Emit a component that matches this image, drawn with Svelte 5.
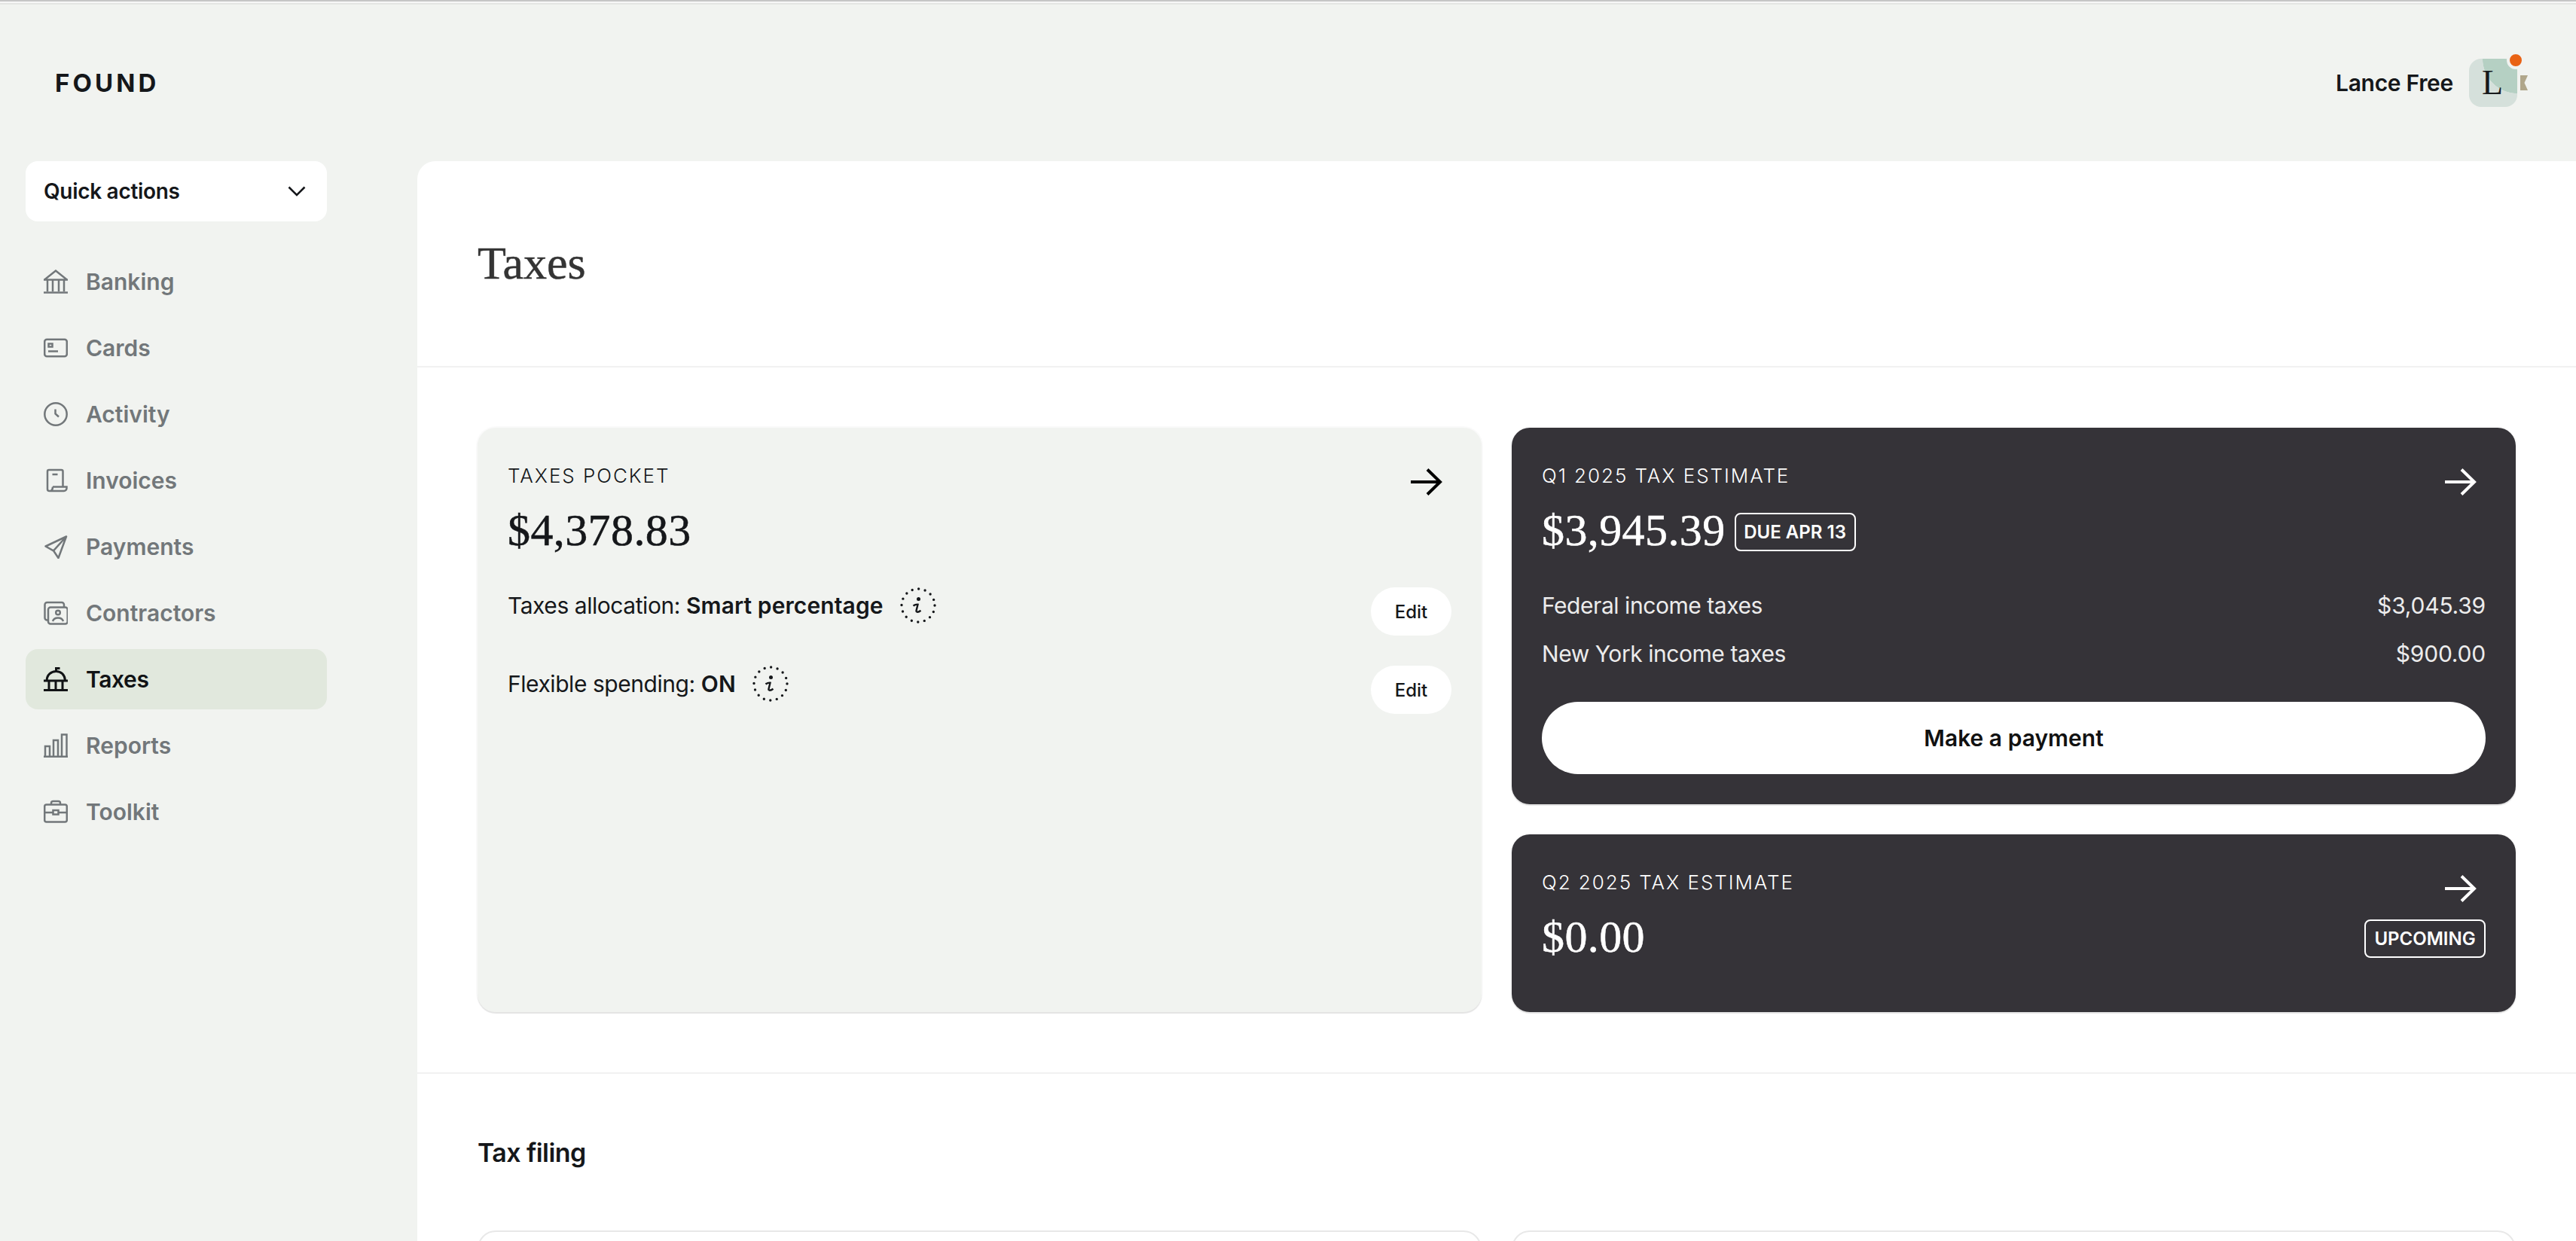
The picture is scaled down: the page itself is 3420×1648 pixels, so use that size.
<script>
  const nav = [
    { name: 'Banking' }, { name: 'Cards' }, { name: 'Activity' }, { name: 'Invoices' }, { name: 'Payments' },
    { name: 'Contractors' }, { name: 'Taxes', active: true }, { name: 'Reports' }, { name: 'Toolkit' }
  ];
</script>

{#snippet arrow()}
  <svg class="arrow" viewBox="0 0 42 36" fill="none" stroke="currentColor" stroke-width="4"><path d="M0 18h39M22 1.500l17 16.500-17 16.500" /></svg>
{/snippet}

{#snippet info()}
  <svg class="info" viewBox="0 0 48 48" fill="none" stroke="currentColor">
    <circle cx="24" cy="24" r="22" stroke-width="3.400" stroke-linecap="round" stroke-dasharray="0 8.64" />
    <circle cx="24.500" cy="15.500" r="2.500" fill="currentColor" stroke="none" />
    <path d="M17.500 24.500c2-1.500 4-2 6-1.800l-2 8.300c-.4 2.300 2.500 2.300 6-.3" stroke-width="2.400" />
  </svg>
{/snippet}

{#snippet icon(name)}
  <svg class="nav-icon" viewBox="0 0 32 32" fill="none" stroke="currentColor" stroke-width="2.500">
    {#if name === 'Banking'}
      <path d="M1 13.500 16 1.500l15 12zM0 13.500h32M5 14v15M12 14v15M20 14v15M27 14v15M0 30.500h32" />
    {:else if name === 'Cards'}
      <rect x="1.200" y="4.800" width="29.600" height="22.400" rx="3" /><rect x="6.500" y="10.500" width="5" height="4" /><path d="M6 20.500h13" />
    {:else if name === 'Activity'}
      <circle cx="16" cy="16" r="14.700" /><path d="M15.500 9.500v6l4.500 4" />
    {:else if name === 'Invoices'}
      <path d="M5 26V4a2 2 0 0 1 2-2h16.500a2 2 0 0 1 2 2v20M11.500 8h7" />
      <path d="M12 24.500h18.500v2a3.500 3.500 0 0 1-3.500 3.500H7.500A2.500 2.500 0 0 1 5 27.500V26M12 24.500c0 2.500-.5 4.500-2.500 5.500" />
    {:else if name === 'Payments'}
      <path d="M30 2.500 2.500 15.500l10.500 5.800 6.500 9.700zM30 2.500 13 21.300" stroke-linejoin="round" />
    {:else if name === 'Contractors'}
      <rect x="6" y="8.500" width="25.700" height="22" rx="3" />
      <path d="M6 25.500H4.500a3 3 0 0 1-3-3V5a3 3 0 0 1 3-3h19.500a3 3 0 0 1 3 3v3.500" />
      <circle cx="19" cy="15.500" r="2.800" /><path d="M12 27c1-3 4-4.500 7-4.500s6 1.500 7 4.500" />
    {:else if name === 'Taxes'}
      <path d="M16.500 6V1.500h5M4 17.500C4.500 10 10 5.500 16.500 5.500S28 10 28.500 17.500M0 18h32M7 18v11M16 18v11M25 18v11M0 30.500h32" stroke-width="3" />
    {:else if name === 'Reports'}
      <path d="M2 31V17h6v14M13 31V9h6v22M24 31V1.500h6.500V31M0 30.800h32" />
    {:else if name === 'Toolkit'}
      <rect x="1.200" y="6.500" width="29.600" height="23" rx="2.500" />
      <path d="M10 6.500V4.500a2.500 2.500 0 0 1 2.500-2.500h7a2.500 2.500 0 0 1 2.500 2.500v2M1 17h11.500M19.500 17H31" /><rect x="12.500" y="14" width="7" height="5.500" />
    {/if}
  </svg>
{/snippet}

<div class="page">
  <div class="chrome"></div>
  <header>
    <div class="logo">FOUND</div>
    <div class="user">
      <span class="uname">Lance Free</span>
      <div class="avatar">
        <span class="letter">L</span>
        <span class="dot"></span>
        <span class="flag"></span>
      </div>
    </div>
  </header>

  <div class="body">
    <aside>
      <button class="quick">
        <span>Quick actions</span>
        <svg class="chev" viewBox="0 0 24 14" fill="none" stroke="currentColor" stroke-width="2.600"><path d="M1.500 1.500 12 12 22.500 1.500" /></svg>
      </button>
      <nav>
        {#each nav as item}
          <div class="nav-item" class:active={item.active}>
            {@render icon(item.name)}
            <span>{item.name}</span>
          </div>
        {/each}
      </nav>
    </aside>

    <main>
      <section class="title-sec"><h1>Taxes</h1></section>
      <section class="cards-sec">
        <div class="card light">
          <div class="head"><div class="label">TAXES POCKET</div>{@render arrow()}</div>
          <div class="amount-row"><div class="amount">$4,378.83</div></div>
          <div class="settings">
            <div class="setting">
              <div class="set-text"><span>Taxes allocation: <b>Smart percentage</b></span>{@render info()}</div>
              <button class="edit">Edit</button>
            </div>
            <div class="setting">
              <div class="set-text"><span>Flexible spending: <b>ON</b></span>{@render info()}</div>
              <button class="edit">Edit</button>
            </div>
          </div>
        </div>
        <div class="stack">
          <div class="card dark">
            <div class="head"><div class="label">Q1 2025 TAX ESTIMATE</div>{@render arrow()}</div>
            <div class="amount-row"><div class="amount">$3,945.39</div><span class="badge">DUE APR 13</span></div>
            <div class="lines">
              <div class="line"><span>Federal income taxes</span><span class="val">$3,045.39</span></div>
              <div class="line"><span>New York income taxes</span><span class="val">$900.00</span></div>
            </div>
            <button class="pay">Make a payment</button>
          </div>
          <div class="card dark q2">
            <div class="head"><div class="label">Q2 2025 TAX ESTIMATE</div>{@render arrow()}</div>
            <div class="amount-row spread"><div class="amount">$0.00</div><span class="badge">UPCOMING</span></div>
          </div>
        </div>
      </section>
      <section class="filing">
        <h2>Tax filing</h2>
        <div class="filing-grid"><div class="stub"></div><div class="stub"></div></div>
      </section>
    </main>
  </div>
</div>

<style>
  :global(body) { margin: 0; background: #f1f3f0; }
  .page { width: 3420px; height: 1648px; overflow: hidden; background: #f1f3f0; font-family: Inter, "Liberation Sans", sans-serif; color: #15171a; display: flex; flex-direction: column; }
  .chrome { height: 2px; border-top: 2px solid #c6c6c6; border-bottom: 2px solid #e4e5e3; background: #f7f7f7; flex: none; }
  header { height: 208px; flex: none; display: flex; align-items: center; justify-content: space-between; padding: 0 78px 0 73px; }
  .logo { font-size: 33px; font-weight: 700; letter-spacing: 0.125em; line-height: 1; }
  .user { display: flex; align-items: center; gap: 21px; }
  .uname { font-size: 30px; font-weight: 600; letter-spacing: -0.3px; }
  .avatar { position: relative; width: 64px; height: 64px; border-radius: 16px; display: flex; align-items: center; justify-content: center; background: radial-gradient(circle 46px at 100% 0, #b5d0c3 99%, #d5e0db 100%); }
  .letter { font-family: "Liberation Serif", serif; font-size: 46px; line-height: 1; color: #171a1c; margin-right: 2px; }
  .dot { position: absolute; right: -10px; top: -10px; width: 16px; height: 16px; border-radius: 50%; background: #e96214; border: 4px solid #f1f2f0; }
  .flag { position: absolute; left: 68px; top: 22px; width: 10px; height: 20px; background: #b0a68a; clip-path: polygon(0 0, 100% 0, 55% 50%, 100% 100%, 0 100%); }

  .body { flex: 1; display: flex; min-height: 0; }
  aside { width: 554px; flex: none; padding-left: 34px; box-sizing: border-box; }
  .quick { width: 400px; height: 80px; border: 0; border-radius: 16px; background: #fff; display: flex; align-items: center; justify-content: space-between; padding: 0 28px 0 24px; font: 600 28px Inter, sans-serif; letter-spacing: -0.3px; color: #15171a; box-sizing: border-box; }
  .chev { width: 24px; height: 14px; }
  nav { margin-top: 40px; width: 400px; display: flex; flex-direction: column; gap: 8px; }
  .nav-item { height: 80px; display: flex; align-items: center; gap: 24px; padding-left: 24px; border-radius: 16px; font-size: 30px; font-weight: 600; color: #72777a; }
  .nav-icon { width: 32px; height: 32px; flex: none; }
  .nav-item.active { background: #e1e8dd; color: #111315; letter-spacing: -0.4px; }

  main { flex: 1; background: #fff; border-top-left-radius: 24px; min-width: 0; }
  .title-sec { height: 270px; box-sizing: content-box; border-bottom: 2px solid #f1f1f1; padding: 0 80px 2px; display: flex; align-items: center; }
  h1 { margin: 0; font: 400 62px "Liberation Serif", serif; color: #343434; -webkit-text-stroke: 0.5px #343434; }
  .cards-sec { padding: 80px; display: grid; grid-template-columns: 1333px 1333px; gap: 40px; border-bottom: 2px solid #f1f1f1; }
  .stack { display: flex; flex-direction: column; gap: 40px; }
  .card { border-radius: 24px; padding: 40px; box-sizing: border-box; box-shadow: 0 0 0 2px rgba(0,0,0,.02), 0 2px 1px rgba(0,0,0,.09); }
  .light { background: #f1f3f0; }
  .dark { background: #353338; color: #fff; height: 500px; }
  .dark.q2 { height: 236px; }
  .head { height: 60px; display: flex; justify-content: space-between; align-items: flex-start; }
  .label { font-size: 26px; line-height: 48px; letter-spacing: 0.075em; font-weight: 300; }
  .arrow { width: 42px; height: 36px; margin: 14px 12px 0 0; display: block; }
  .light .arrow { color: #000; }
  .amount-row { height: 72px; display: flex; align-items: center; gap: 12px; }
  .amount-row.spread { justify-content: space-between; }
  .amount { font: 400 60px/72px "Liberation Serif", serif; letter-spacing: 0.4px; -webkit-text-stroke: 0.5px currentColor; }
  .badge { height: 51px; margin-top: 4px; box-sizing: border-box; width: 161px; border: 2px solid #fff; border-radius: 8px; display: flex; align-items: center; justify-content: center; font-size: 24px; font-weight: 600; white-space: nowrap; }
  .settings { margin-top: 40px; display: flex; flex-direction: column; gap: 40px; }
  .setting { display: flex; justify-content: space-between; align-items: flex-start; }
  .set-text { display: flex; align-items: center; gap: 22px; height: 48px; font-size: 30px; letter-spacing: -0.45px; }
  .set-text b { font-weight: 600; letter-spacing: 0.1px; }
  .info { width: 48px; height: 48px; display: block; color: #15171a; }
  .edit { width: 107px; height: 64px; border: 0; border-radius: 32px; background: #fff; font: 500 24px Inter, sans-serif; color: #15171a; padding: 0; }
  .lines { margin-top: 32px; }
  .line { height: 64px; display: flex; justify-content: space-between; align-items: center; font-size: 30px; color: #ececec; letter-spacing: -0.45px; }
  .val { letter-spacing: -0.2px; }
  .pay { margin-top: 32px; width: 100%; height: 96px; border: 0; border-radius: 48px; background: #fff; color: #111; font: 600 30px Inter, sans-serif; }

  .filing { padding: 0 80px; }
  h2 { margin: 0; height: 208px; display: flex; align-items: center; font-size: 34px; font-weight: 600; letter-spacing: -0.6px; color: #15171a; }
  .filing-grid { display: grid; grid-template-columns: 1333px 1333px; gap: 40px; }
  .stub { height: 200px; border: 2px solid #e8e8e8; border-radius: 24px; box-sizing: border-box; }
</style>
